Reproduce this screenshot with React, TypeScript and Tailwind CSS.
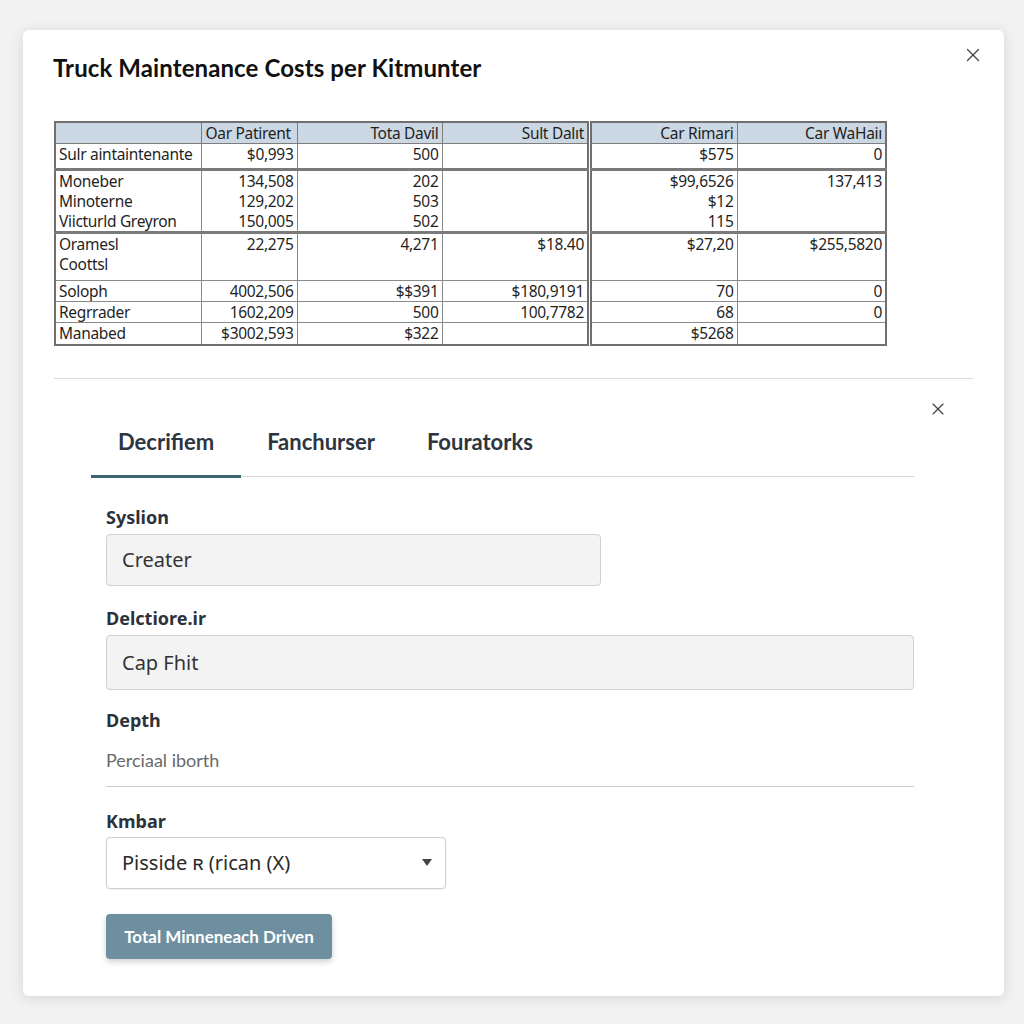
import React from 'react';
import { X } from 'lucide-react';

type Cell = string[];

const leftRows: { cells: Cell[]; h: string; thick?: boolean }[] = [
  { cells: [['Sulr aintaintenante'], ['$0,993'], ['500'], ['']], h: 'h-[26px]', thick: true },
  {
    cells: [
      ['Moneber', 'Minoterne', 'Viicturld Greyron'],
      ['134,508', '129,202', '150,005'],
      ['202', '503', '502'],
      [''],
    ],
    h: 'h-[61px]',
    thick: true,
  },
  { cells: [['Oramesl', 'Coottsl'], ['22,275'], ['4,271'], ['$18.40']], h: 'h-[48px]' },
  { cells: [['Soloph'], ['4002,506'], ['$$391'], ['$180,9191']], h: 'h-[20px]' },
  { cells: [['Regrrader'], ['1602,209'], ['500'], ['100,7782']], h: 'h-[21px]' },
  { cells: [['Manabed'], ['$3002,593'], ['$322'], ['']], h: 'h-[23px]' },
];

const rightRows: Cell[][] = [
  [['$575'], ['0']],
  [['$99,6526', '$12', '115'], ['137,413']],
  [['$27,20'], ['$255,5820']],
  [['70'], ['0']],
  [['68'], ['0']],
  [['$5268'], ['']],
];

const leftWidths = ['w-[146px]', 'w-[96px]', 'w-[145px]', 'w-[146px]'];
const rightWidths = ['w-[146px]', 'w-[149px]'];

function CellLines({ lines, align }: { lines: string[]; align: 'left' | 'right' }) {
  return (
    <div className={align === 'left' ? 'text-left' : 'text-right'}>
      {lines.map((l, i) => (
        <div key={i} className="leading-[20px]">
          {l || '\u00a0'}
        </div>
      ))}
    </div>
  );
}

function CostTables() {
  return (
    <div className="flex gap-[1px] text-[15.5px] tracking-[-0.3px] text-[#1f1f1f] font-['Noto_Sans',sans-serif]">
      <table className="border-collapse border-2 border-[#6f6f6f]">
        <thead>
          <tr className="h-[21px] bg-[#cbd7e2]">
            {['', 'Oar Patirent', 'Tota Davil', 'Sult Dalıt'].map((t, i) => (
              <th
                key={i}
                className={`${leftWidths[i]} border border-[#7d7d7d] px-[3px] font-normal leading-[18px] ${
                  i === 1 ? 'text-left pl-[4px]' : 'text-right'
                }`}
              >
                {t}
              </th>
            ))}
          </tr>
        </thead>
        <tbody>
          {leftRows.map((r, ri) => (
            <tr key={ri} className={`${r.h} align-top`}>
              {r.cells.map((c, ci) => (
                <td
                  key={ci}
                  className={`border border-[#8a8a8a] px-[3px] ${r.thick ? 'border-b-[3px] border-b-[#7a7a7a]' : ''}`}
                >
                  <CellLines lines={c} align={ci === 0 ? 'left' : 'right'} />
                </td>
              ))}
            </tr>
          ))}
        </tbody>
      </table>
      <table className="border-collapse border-2 border-[#6f6f6f]">
        <thead>
          <tr className="h-[21px] bg-[#cbd7e2]">
            {['Car Rimari', 'Car WaHaiı'].map((t, i) => (
              <th
                key={i}
                className={`${rightWidths[i]} border border-[#7d7d7d] px-[3px] font-normal text-right leading-[18px]`}
              >
                {t}
              </th>
            ))}
          </tr>
        </thead>
        <tbody>
          {rightRows.map((r, ri) => (
            <tr key={ri} className={`${leftRows[ri].h} align-top`}>
              {r.map((c, ci) => (
                <td
                  key={ci}
                  className={`border border-[#8a8a8a] px-[3px] ${
                    leftRows[ri].thick ? 'border-b-[3px] border-b-[#7a7a7a]' : ''
                  }`}
                >
                  <CellLines lines={c} align="right" />
                </td>
              ))}
            </tr>
          ))}
        </tbody>
      </table>
    </div>
  );
}

function Label({ children }: { children: React.ReactNode }) {
  return (
    <div className="text-[18px] font-bold leading-[24px] text-[#2b323b] font-['Noto_Sans',sans-serif]">
      {children}
    </div>
  );
}

export default function App() {
  const tabs = ['Decrifiem', 'Fanchurser', 'Fouratorks'];
  return (
    <div className="min-h-[1024px] w-[1024px] bg-[#f2f2f2] pt-[30px] pl-[23px]">
      <div className="w-[981px] h-[966px] rounded-[6px] bg-white shadow-[0_2px_14px_rgba(0,0,0,0.12)] pt-[24px] pl-[30px] pr-[31px]">
        <div className="flex items-start justify-between">
          <h1 className="text-[24px] font-bold leading-[28px] text-[#111] font-['Lato',sans-serif] tracking-[0.1px]">
            Truck Maintenance Costs per Kitmunter
          </h1>
          <X className="mt-[-10px] mr-[-11px] h-[22px] w-[22px] text-[#444]" strokeWidth={1.4} />
        </div>

        <div className="mt-[39px] pl-[1px]">
          <CostTables />
        </div>

        <div className="mt-[32px] ml-[1px] h-px bg-[#dcdcdc]" />

        <div className="pl-[38px] pr-[59px]">
          <div className="flex justify-end pt-[20px]">
            <X className="mr-[-34px] h-[20px] w-[20px] text-[#444]" strokeWidth={1.4} />
          </div>

          <div className="mt-[10px] flex border-b border-[#d6d6d6]">
            {tabs.map((t, i) => (
              <div
                key={t}
                className={`px-[26px] pb-[20px] text-[22px] font-bold leading-[26px] text-[#2c3540] font-['Lato',sans-serif] ${
                  i === 0 ? 'border-b-[3px] border-[#3e6572] mb-[-2px] px-[27px]' : ''
                }`}
              >
                {t}
              </div>
            ))}
          </div>

          <div className="pl-[15px] pt-[28px]">
            <Label>Syslion</Label>
            <div className="mt-[5px] flex h-[52px] w-[495px] items-center rounded-[4px] border border-[#cfcfcf] bg-[#f3f3f3] px-[15px] text-[20px] text-[#333] font-['Noto_Sans',sans-serif]">
              Creater
            </div>

            <div className="mt-[20px]">
              <Label>Delctiore.ir</Label>
            </div>
            <div className="mt-[5px] flex h-[55px] w-[808px] items-center rounded-[4px] border border-[#cfcfcf] bg-[#f3f3f3] px-[15px] text-[20px] text-[#333] font-['Noto_Sans',sans-serif]">
              Cap Fhit
            </div>

            <div className="mt-[18px]">
              <Label>Depth</Label>
            </div>
            <div className="mt-[16px] w-[808px] border-b border-[#cdcdcd] pb-[14px] text-[18px] leading-[24px] text-[#6a6a6a] font-['Lato',sans-serif]">
              Perciaal iborth
            </div>

            <div className="mt-[22px]">
              <Label>Kmbar</Label>
            </div>
            <div className="mt-[4px] flex h-[52px] w-[340px] items-center justify-between rounded-[4px] border border-[#cfcfcf] bg-white px-[15px] text-[20px] text-[#2a2a2a] font-['Noto_Sans',sans-serif] shadow-[0_1px_2px_rgba(0,0,0,0.06)]">
              <span>Pisside ʀ (rican (X)</span>
              <svg width="10" height="8" viewBox="0 0 10 8" className="mr-[-2px]">
                <path d="M0 0 L10 0 L5 7 Z" fill="#444" />
              </svg>
            </div>

            <button className="mt-[25px] flex h-[45px] w-[226px] items-center justify-center rounded-[4px] bg-[#6d8fa0] text-[17px] font-bold text-white font-['Lato',sans-serif] shadow-[0_3px_6px_rgba(0,0,0,0.18)]">
              Total Minneneach Driven
            </button>
          </div>
        </div>
      </div>
    </div>
  );
}
